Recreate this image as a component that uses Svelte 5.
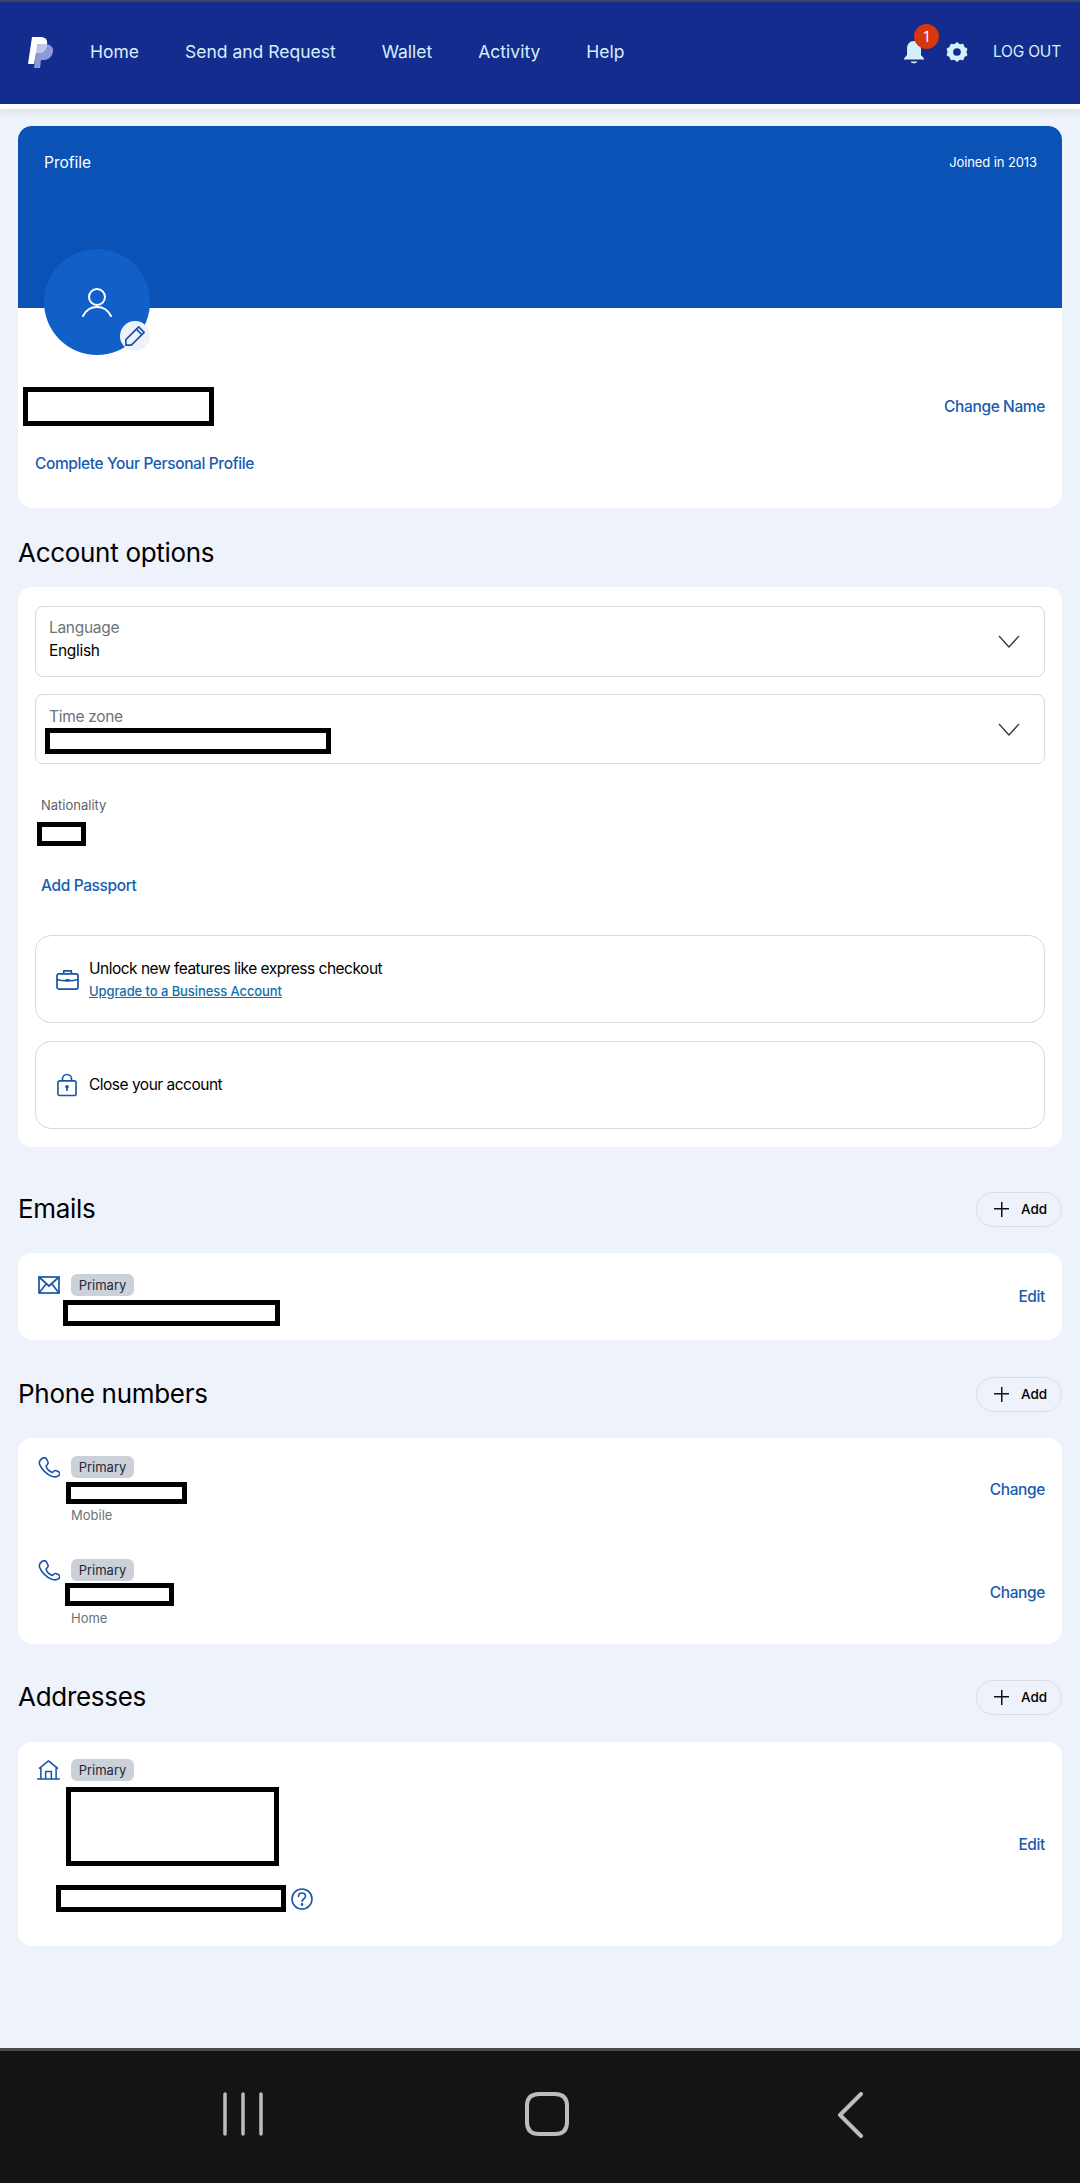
<script>
  const navLinks = ['Home', 'Send and Request', 'Wallet', 'Activity', 'Help'];
  const phones = [
    { label: 'Mobile', box: 'phone-a' },
    { label: 'Home', box: 'phone-b' }
  ];
</script>

<div class="page">
  <header class="topbar">
    <svg class="logo" viewBox="0 0 27 31" width="27" height="31">
      <path d="M9 7h8c5 0 9 3 8 8-1 5-5 8-9 8h-3l-1 8H6z" fill="#8d99d4" />
      <path d="M4 0h8c5 0 8 2 7 8-1 6-5 8-9 8H8L6 27H0z" fill="#fff" />
      <path d="M9 7h10c-.5 5-4.500 9-9 9H8z" fill="#bcc5ea" />
    </svg>
    <nav class="links">
      {#each navLinks as link}
        <span>{link}</span>
      {/each}
    </nav>
    <div class="actions">
      <div class="bell">
        <svg viewBox="0 0 22 24" width="22" height="24">
          <path d="M11 1c4.500 0 7 3.500 7 8v6l3 3.500v1H1v-1L4 15V9c0-4.500 2.500-8 7-8z" fill="#d5f0fb" />
          <path d="M8 21.500h6v1l-3 1-3-1z" fill="#d5f0fb" />
        </svg>
        <span class="badge">1</span>
      </div>
      <svg class="gear" viewBox="0 0 24 24" width="22" height="22">
        <path fill-rule="evenodd" fill="#d5f0fb" d="M12 1l3 2.500 3.800-.6 1.400 3.600 3.300 2L22.300 12l1.200 3.500-3.300 2-1.400 3.600-3.800-.6L12 23l-3-2.500-3.800.6-1.400-3.600-3.300-2L1.700 12 .5 8.500l3.300-2 1.400-3.600 3.800.6zM12 7.800a4.200 4.200 0 1 0 0 8.400 4.200 4.200 0 0 0 0-8.400z" />
      </svg>
      <span class="logout">LOG OUT</span>
    </div>
  </header>
  <div class="strip"></div>

  <main class="content">
    <section class="card profile">
      <div class="banner">
        <span>Profile</span>
        <span class="joined">Joined in 2013</span>
      </div>
      <div class="avatar">
        <svg viewBox="0 0 30 30" width="30" height="30" fill="none" stroke="#fff" stroke-width="2" stroke-linecap="round">
          <circle cx="15" cy="10" r="8" />
          <path d="M1 29c3-6 8-9 14-9s11 3 14 9" />
        </svg>
        <div class="edit">
          <svg viewBox="0 0 24 24" width="22" height="22" fill="none" stroke="#1a54a8" stroke-width="1.800" stroke-linejoin="round">
            <path d="M2 22V16L16 2l6 6L8 22z" />
            <path d="M13.500 4.500l6 6" />
          </svg>
        </div>
      </div>
      <div class="name-row">
        <div class="redact name"></div>
        <a class="link">Change Name</a>
      </div>
      <a class="link complete">Complete Your Personal Profile</a>
    </section>

    <h2 class="options-title">Account options</h2>
    <section class="card options">
      <div class="select">
        <div class="select-text">
          <div class="select-label">Language</div>
          <div class="select-value">English</div>
        </div>
        <svg viewBox="0 0 22 13" width="22" height="13" fill="none" stroke="#3a3f45" stroke-width="1.400"><path d="M1 1l10 11L21 1" /></svg>
      </div>
      <div class="select second">
        <div class="select-text">
          <div class="select-label">Time zone</div>
          <div class="redact zone"></div>
        </div>
        <svg viewBox="0 0 22 13" width="22" height="13" fill="none" stroke="#3a3f45" stroke-width="1.400"><path d="M1 1l10 11L21 1" /></svg>
      </div>
      <div class="nationality">Nationality</div>
      <div class="redact country"></div>
      <a class="link passport">Add Passport</a>

      <div class="action-box">
        <svg viewBox="0 0 24 22" width="23" height="21" fill="none" stroke="#1a54a8" stroke-width="1.800" stroke-linejoin="round">
          <rect x="1" y="5" width="22" height="16" rx="2" />
          <path d="M8 5V2h8v3M1 11c6 2 16 2 22 0M10 11.500h4" />
        </svg>
        <div class="action-text">
          <div>Unlock new features like express checkout</div>
          <a class="upgrade">Upgrade to a Business Account</a>
        </div>
      </div>
      <div class="action-box close">
        <svg viewBox="0 0 22 25" width="20" height="24" fill="none" stroke="#1a54a8" stroke-width="1.800" stroke-linejoin="round">
          <rect x="1" y="8" width="20" height="16" rx="2" />
          <path d="M6 8V6a5 5 0 0 1 10 0v2" />
          <circle cx="11" cy="14.500" r="2" fill="#1a54a8" stroke="none" />
          <path d="M11 15v4" />
        </svg>
        <div class="action-text">Close your account</div>
      </div>
    </section>

    <div class="section-head emails-head">
      <h2>Emails</h2>
      <button class="add"><i class="plus"></i>Add</button>
    </div>
    <section class="card entry email">
      <div class="entry-main">
        <div class="entry-top">
          <svg class="icon" viewBox="0 0 22 18" width="22" height="18" fill="none" stroke="#1a54a8" stroke-width="1.700">
            <rect x="1" y="1" width="20" height="16" />
            <path d="M1 1l10 9 10-9M1 17l7.500-9.500M21 17l-7.500-9.500" />
          </svg>
          <span class="pill">Primary</span>
        </div>
        <div class="redact mail"></div>
      </div>
      <a class="link">Edit</a>
    </section>

    <div class="section-head phones-head">
      <h2>Phone numbers</h2>
      <button class="add"><i class="plus"></i>Add</button>
    </div>
    <section class="card phones">
      {#each phones as phone}
        <div class="phone-row {phone.box}">
          <div class="entry-main">
            <div class="entry-top">
              <svg class="icon phone-icon" viewBox="0 0 22 21" width="22" height="21" fill="none" stroke="#1a54a8" stroke-width="1.600" stroke-linejoin="round">
                <path d="M4 1.500c1.500-1 3.500-1 4.500.5L10 5c.5 1 0 2-1 3L8 9c1 3 3.500 5.500 6.500 6.500l1-1c1-1 2-1.200 3-.8l2 1c1.500 1 1.500 3 .2 4-2 1.500-4 1.500-7 .5C9 17.500 3 12 1.500 7 1 5 2.500 2.500 4 1.500z" />
              </svg>
              <span class="pill">Primary</span>
            </div>
            <div class="redact number"></div>
            <div class="phone-type">{phone.label}</div>
          </div>
          <a class="link">Change</a>
        </div>
      {/each}
    </section>

    <div class="section-head addr-head">
      <h2>Addresses</h2>
      <button class="add"><i class="plus"></i>Add</button>
    </div>
    <section class="card entry address">
      <div class="entry-main">
        <div class="entry-top">
          <svg class="icon house" viewBox="0 0 26 21" width="25" height="20" fill="none" stroke="#1a54a8" stroke-width="1.600" stroke-linejoin="round">
            <path d="M3 9L13 1l10 8M5 8v12M21 8v12M1 20h24M10 20v-8h6v8" />
          </svg>
          <span class="pill">Primary</span>
        </div>
        <div class="redact street"></div>
        <div class="geo">
          <div class="redact city"></div>
          <svg viewBox="0 0 22 22" width="22" height="22" fill="none" stroke="#1a54a8" stroke-width="1.600" stroke-linecap="round">
            <circle cx="11" cy="11" r="10" />
            <path d="M7.500 8.500c0-2 1.500-3.500 3.500-3.500s3.500 1.500 3.500 3.300c0 2.700-3.500 2.700-3.500 5.200" />
            <circle cx="11" cy="16.500" r=".6" />
          </svg>
        </div>
      </div>
      <a class="link">Edit</a>
    </section>
  </main>

  <footer class="softkeys">
    <svg viewBox="0 0 42 44" width="42" height="44" fill="none" stroke="#bdbdbd" stroke-width="3.500" stroke-linecap="round">
      <path d="M3 2v40M21 2v40M39 2v40" />
    </svg>
    <svg class="home-key" viewBox="0 0 44 44" width="44" height="44" fill="none" stroke="#bdbdbd" stroke-width="4">
      <path d="M14 2h16c8 0 12 4 12 12v16c0 8-4 12-12 12H14C6 42 2 38 2 30V14C2 6 6 2 14 2z" />
    </svg>
    <svg class="back-key" viewBox="0 0 26 46" width="26" height="46" fill="none" stroke="#bdbdbd" stroke-width="4" stroke-linecap="round" stroke-linejoin="round">
      <path d="M24 2L3 23l21 21" />
    </svg>
  </footer>
</div>

<style>
  :global(body) {
    background: #eef2fa;
  }

  .page {
    height: 2183px;
    width: 1080px;
    display: flex;
    flex-direction: column;
    font-family: Inter, "Liberation Sans", sans-serif;
    color: #000;
    overflow: hidden;
  }

  a {
    cursor: pointer;
  }

  h2 {
    margin: 0;
    font-size: 26px;
    font-weight: 400;
    line-height: 36px;
    letter-spacing: -0.3px;
  }

  .topbar {
    height: 104px;
    flex: none;
    box-sizing: border-box;
    border-top: 2px solid #3a4463;
    background: #142c8e;
    display: flex;
    align-items: center;
    color: #d5f0fb;
    padding: 0 19px 2px 28px;
  }

  .logo {
    flex: none;
  }

  .links {
    display: flex;
    gap: 46px;
    margin: 0 0 2px 35px;
    font-size: 17.5px;
  }

  .actions {
    margin-left: auto;
    display: flex;
    align-items: center;
  }

  .bell {
    position: relative;
    height: 24px;
  }

  .badge {
    position: absolute;
    left: 11px;
    top: -16px;
    width: 25px;
    height: 25px;
    border-radius: 50%;
    background: #d8360f;
    color: #fff;
    font-size: 14px;
    line-height: 25px;
    text-align: center;
  }

  .gear {
    margin-left: 21px;
  }

  .logout {
    margin: 0 0 2px 25px;
    font-size: 15.5px;
    letter-spacing: -0.2px;
  }

  .strip {
    height: 5px;
    flex: none;
    background: #fff;
    box-shadow: 0 3px 6px rgba(40, 50, 90, 0.1);
  }

  .content {
    flex: 1;
    padding: 17px 18px 0;
  }

  .card {
    background: #fff;
    border-radius: 14px;
  }

  .profile {
    height: 382px;
    position: relative;
    overflow: hidden;
  }

  .banner {
    height: 182px;
    background: #0a52b5;
    color: #fff;
    display: flex;
    justify-content: space-between;
    padding: 27px 25px 0 26px;
    box-sizing: border-box;
    font-size: 15.5px;
  }

  .joined {
    font-size: 13px;
    line-height: 19px;
    letter-spacing: -0.1px;
  }

  .avatar {
    position: absolute;
    left: 26px;
    top: 123px;
    width: 106px;
    height: 106px;
    border-radius: 50%;
    background: #1160ca;
    display: flex;
    align-items: center;
    justify-content: center;
  }

  .edit {
    position: absolute;
    right: 0;
    bottom: 4px;
    width: 30px;
    height: 30px;
    border-radius: 50%;
    background: #f0f2fa;
    display: flex;
    align-items: center;
    justify-content: center;
  }

  .redact {
    box-sizing: border-box;
    border: 5px solid #000;
    background: #fff;
  }

  .name-row {
    display: flex;
    align-items: center;
    justify-content: space-between;
    margin: 79px 17px 0 5px;
  }

  .name {
    width: 191px;
    height: 39px;
  }

  .link {
    color: #1a5bb0;
    font-size: 15.5px;
    font-weight: 500;
    letter-spacing: -0.38px;
    white-space: nowrap;
  }

  .complete {
    display: block;
    margin: 28px 0 0 17px;
    line-height: 20px;
  }

  .options-title {
    margin-top: 27px;
  }

  .options {
    margin-top: 16px;
    height: 560px;
    padding: 19px 17px 0;
    box-sizing: border-box;
  }

  .select {
    height: 71px;
    box-sizing: border-box;
    border: 1px solid #d6d9de;
    border-radius: 8px;
    padding: 0 24px 0 13px;
    display: flex;
    justify-content: space-between;
    align-items: center;
  }

  .select-text {
    align-self: flex-start;
    padding-top: 10px;
    letter-spacing: -0.3px;
  }

  .second {
    margin-top: 17px;
    height: 70px;
  }

  .second .select-text {
    padding-top: 11px;
  }

  .select-label {
    color: #6c7378;
    font-size: 15.5px;
    line-height: 22px;
  }

  .select-value {
    font-size: 15.5px;
    line-height: 24px;
  }

  .zone {
    width: 286px;
    height: 26px;
    margin: 0 0 0 -4px;
  }

  .nationality {
    margin: 32px 0 0 6px;
    color: #5f6368;
    font-size: 13px;
    line-height: 18px;
  }

  .country {
    width: 49px;
    height: 24px;
    margin: 8px 0 0 2px;
  }

  .passport {
    display: block;
    margin: 30px 0 0 6px;
    line-height: 20px;
  }

  .action-box {
    height: 88px;
    margin-top: 39px;
    box-sizing: border-box;
    border: 1px solid #d6d9de;
    border-radius: 16px;
    padding-left: 20px;
    display: flex;
    align-items: center;
    gap: 10px;
  }

  .close {
    margin-top: 18px;
    padding-left: 21px;
    gap: 12px;
  }

  .action-text {
    font-size: 15.5px;
    line-height: 22px;
    letter-spacing: -0.5px;
  }

  .upgrade {
    display: block;
    color: #146ea8;
    font-size: 13px;
    font-weight: 500;
    text-decoration: underline;
    line-height: 20px;
    margin-top: 1px;
    letter-spacing: -0.08px;
  }

  .section-head {
    display: flex;
    justify-content: space-between;
    align-items: center;
    height: 36px;
  }

  .emails-head {
    margin-top: 44px;
  }

  .phones-head {
    margin-top: 36px;
  }

  .addr-head {
    margin-top: 35px;
  }

  .add {
    width: 86px;
    height: 35px;
    border: 1px solid #d9dde6;
    border-radius: 18px;
    background: transparent;
    font: 500 13.5px Inter, "Liberation Sans", sans-serif;
    color: #000;
    display: flex;
    align-items: center;
    padding: 0 0 0 17px;
    gap: 12px;
  }

  .plus {
    width: 15px;
    height: 15px;
    background:
      linear-gradient(#111, #111) center / 100% 1.5px no-repeat,
      linear-gradient(#111, #111) center / 1.5px 100% no-repeat;
  }

  .entry,
  .phone-row {
    display: flex;
    justify-content: space-between;
    align-items: center;
    padding-right: 17px;
  }

  .entry-main {
    align-self: flex-start;
  }

  .entry-top {
    display: flex;
    align-items: center;
    height: 22px;
  }

  .icon {
    flex: none;
    width: 22px;
    margin-left: 20px;
  }

  .pill {
    margin-left: 11px;
    width: 63px;
    height: 22px;
    border-radius: 6px;
    background: #ccd1d9;
    color: #1f2a37;
    font-size: 13px;
    line-height: 22px;
    text-align: center;
  }

  .email {
    margin-top: 26px;
    height: 87px;
  }

  .email .entry-main {
    padding-top: 21px;
  }

  .mail {
    width: 217px;
    height: 26px;
    margin: 4px 0 0 45px;
  }

  .phones {
    margin-top: 26px;
    height: 206px;
    padding-top: 18px;
    box-sizing: border-box;
  }

  .phone-row {
    height: 66px;
  }

  .phone-b {
    margin-top: 37px;
  }

  .number {
    height: 22px;
    margin: 4px 0 0 48px;
    width: 121px;
  }

  .phone-b .number {
    height: 23px;
    margin: 2px 0 0 47px;
    width: 109px;
  }

  .phone-type {
    margin: 2px 0 0 53px;
    color: #6c7378;
    font-size: 13px;
    line-height: 18px;
  }

  .phone-b .phone-type {
    margin-top: 3px;
  }

  .address {
    margin-top: 27px;
    height: 204px;
  }

  .address .entry-main {
    padding-top: 17px;
  }

  .house {
    margin-left: 18px;
    width: 25px;
  }

  .address .pill {
    margin-left: 10px;
  }

  .street {
    width: 213px;
    height: 79px;
    margin: 6px 0 0 48px;
  }

  .geo {
    display: flex;
    align-items: center;
    gap: 5px;
    margin: 19px 0 0 38px;
  }

  .city {
    width: 230px;
    height: 27px;
  }

  .softkeys {
    height: 135px;
    flex: none;
    box-sizing: border-box;
    border-top: 3px solid #4a4a4a;
    background: #141414;
    display: flex;
    align-items: flex-start;
    padding: 41px 0 0 222px;
  }

  .home-key {
    margin-left: 261px;
  }

  .back-key {
    margin-left: 268px;
  }
</style>
